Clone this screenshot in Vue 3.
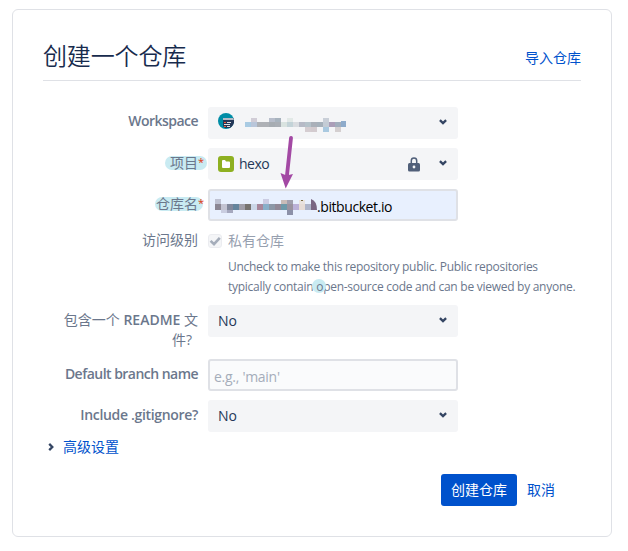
<script setup>
const workspaceCells = [
  [0, 4, 6, 5, '#a9cbe3'], [6, 0, 6, 4, '#d1cdd7'], [6, 4, 6, 5, '#b9c6da'], [12, 4, 12, 5, '#aeb1b6'],
  [24, 0, 6, 4, '#b7bdcb'], [24, 4, 6, 5, '#a6acb2'], [30, 0, 6, 4, '#a7b3be'], [30, 4, 6, 5, '#a9aeb5'],
  [36, 4, 6, 5, '#d9e3e0'], [42, 0, 6, 4, '#e2e9e7'], [42, 4, 6, 5, '#c3d3d8'], [48, 4, 6, 5, '#d9dce0'],
  [54, 4, 6, 5, '#b6bac6'], [60, 4, 6, 5, '#b5c2ca'], [60, 9, 6, 5, '#d5cdd1'], [66, 4, 6, 5, '#aab0b9'],
  [66, 9, 6, 5, '#d3cbcf'], [72, 4, 6, 5, '#a6b1bb'], [78, 0, 6, 4, '#c9cfd8'], [78, 4, 6, 5, '#c4ccd5'],
  [78, 9, 6, 5, '#a9c9e0'], [84, 4, 6, 5, '#ab9eb8'], [90, 4, 6, 5, '#a1adbc'], [90, 9, 6, 5, '#d4cfd0'],
  [96, 3, 5, 6, '#8eabcb']
]
const repoCells = [
  [0, 0, 6, 5, '#bfc2d2'], [0, 5, 6, 6, '#8c8793'], [6, 5, 6, 6, '#c3c3d1'], [6, 11, 6, 3, '#c9cde0'],
  [12, 5, 6, 6, '#82889b'], [12, 11, 6, 3, '#a5a8be'], [18, 5, 6, 6, '#65849c'], [24, 5, 6, 6, '#a09ea8'],
  [30, 5, 6, 6, '#77736f'], [36, 5, 6, 6, '#cbd7e8'], [42, 5, 6, 6, '#a7879b'], [48, 0, 6, 5, '#cbcce3'],
  [48, 5, 6, 6, '#88afc9'], [54, 5, 6, 6, '#8c98a7'], [60, 5, 6, 6, '#918997'], [66, 1, 6, 4, '#c8bcb8'],
  [66, 5, 6, 6, '#6d99a9'], [72, 1, 6, 4, '#a09fae'], [72, 5, 6, 6, '#99929f'], [72, 11, 6, 5, '#8d91a8'],
  [78, 5, 6, 6, '#bbb1d8'], [84, 1, 6, 4, '#e9e3df'], [84, 5, 6, 6, '#e6dcd6'], [86, 1, 2, 1, '#786d40'],
  [90, 5, 6, 6, '#aeb5ca']
]
</script>

<template>
  <main class="card">
    <header class="head">
      <h1>创建一个仓库</h1>
      <a class="import">导入仓库</a>
    </header>

    <form class="form" @submit.prevent>
      <div class="row">
        <label class="label ws">Workspace</label>
        <div class="select">
          <svg class="avatar" width="16" height="16" viewBox="0 0 16 16">
            <circle cx="8" cy="8" r="8" fill="#008da6" />
            <path d="M5 5h10.4a8 8 0 0 1-1.9 8.8L12 15H7L5 13z" fill="#253858" />
            <path d="M5 5h10.4l.5 2H5z" fill="#b3bac5" />
            <path d="M6 9.5h2M6 13.5h2" stroke="#ff5630" />
            <path d="M9 9.5h4M6 11.5h6M9 13.5h3" stroke="#dfe1e6" />
          </svg>
          <svg class="mosaic" width="101" height="14">
            <rect v-for="(c, i) in workspaceCells" :key="i" :x="c[0]" :y="c[1]" :width="c[2]" :height="c[3]" :fill="c[4]" />
          </svg>
          <svg class="chev" width="8" height="6" viewBox="0 0 8 6"><path d="M.9 1.1 4 4.1 7.1 1.1" /></svg>
        </div>
      </div>

      <div class="row">
        <label class="label"><span class="mark project">项目<i>*</i></span></label>
        <div class="select">
          <svg class="folder" width="16" height="16" viewBox="0 0 16 16">
            <rect width="16" height="16" rx="3" fill="#8eb021" />
            <path d="M4 5q0-1 1-1h2l1 1.5h3q1 0 1 1V11q0 1-1 1H5q-1 0-1-1z" fill="#fff" />
          </svg>
          <span class="value hexo">hexo</span>
          <svg class="lock" width="12" height="15" viewBox="0 0 12 15">
            <path d="M3.3 7V3.7a2.7 2.7 0 0 1 5.4 0V7" fill="none" stroke="#505f79" stroke-width="1.5" />
            <rect y="6" width="12" height="8.5" rx="1.5" fill="#505f79" />
            <circle cx="6" cy="10" r="1.4" fill="#f4f5f7" />
          </svg>
          <svg class="chev" width="8" height="6" viewBox="0 0 8 6"><path d="M.9 1.1 4 4.1 7.1 1.1" /></svg>
        </div>
      </div>

      <div class="row">
        <label class="label"><span class="mark repo">仓库名<i>*</i></span></label>
        <div class="input filled">
          <svg class="mosaic" width="102" height="17">
            <rect v-for="(c, i) in repoCells" :key="i" :x="c[0]" :y="c[1]" :width="c[2]" :height="c[3]" :fill="c[4]" />
            <path d="M96 0q6 2 6 11h-6z" fill="#796583" />
          </svg>
          <span class="domain">.bitbucket.io</span>
        </div>
        <svg class="arrow" width="16" height="54" viewBox="0 0 16 54">
          <path d="M11 2 6.7 42" stroke="#a349a4" stroke-width="3.8" stroke-linecap="round" />
          <path d="M.5 37 6.5 39.5 13 38 5.7 52.5z" fill="#a349a4" />
        </svg>
      </div>

      <div class="row access">
        <label class="label">访问级别</label>
        <div class="access-body">
          <div class="check-line">
            <svg width="14" height="14" viewBox="0 0 14 14">
              <rect x=".5" y=".5" width="13" height="13" rx="2.5" fill="#f4f5f7" stroke="#ebecf0" />
              <path d="m2.6 6.8 3.4 3.4 5.8-6.4" fill="none" stroke="#a5adba" stroke-width="2.6" />
            </svg>
            <span>私有仓库</span>
          </div>
          <p class="help">
            <span class="line one">Uncheck to make this repository public. Public repositories</span>
            <span class="line two">typically contain <b class="dot">o</b>pen-source code and can be viewed by anyone.</span>
          </p>
        </div>
      </div>

      <div class="row readme">
        <label class="label">包含一个 <b>README</b> 文<br /><span class="tail">件?</span></label>
        <div class="select">
          <span class="value">No</span>
          <svg class="chev" width="8" height="6" viewBox="0 0 8 6"><path d="M.9 1.1 4 4.1 7.1 1.1" /></svg>
        </div>
      </div>

      <div class="row">
        <label class="label branch">Default branch name</label>
        <div class="input"><span class="placeholder">e.g., 'main'</span></div>
      </div>

      <div class="row">
        <label class="label ignore">Include .gitignore?</label>
        <div class="select">
          <span class="value">No</span>
          <svg class="chev" width="8" height="6" viewBox="0 0 8 6"><path d="M.9 1.1 4 4.1 7.1 1.1" /></svg>
        </div>
      </div>

      <a class="advanced">
        <svg width="6" height="8" viewBox="0 0 6 8"><path d="M1.2 .9 4.3 4 1.2 7.1" /></svg>
        <span>高级设置</span>
      </a>

      <footer class="actions">
        <button type="submit">创建仓库</button>
        <a>取消</a>
      </footer>
    </form>
  </main>
</template>

<style>
body {
  background: #fff;
}
</style>

<style scoped>
* {
  box-sizing: border-box;
}
.card {
  width: 600px;
  height: 528px;
  margin: 9px 0 0 12px;
  padding: 0 30px;
  border: 1px solid #dfe1e6;
  border-radius: 6px;
  font: 14px/20px "Open Sans", "Noto Sans CJK SC", sans-serif;
  color: #253858;
  white-space: nowrap;
}
.head {
  display: flex;
  justify-content: space-between;
  height: 71px;
  border-bottom: 1px solid #dfe1e6;
}
h1 {
  margin: 30px 0 0;
  font: 350 24px/30px "Noto Sans CJK SC", sans-serif;
  letter-spacing: -0.15px;
  color: #172b4d;
}
.import {
  margin-top: 38px;
}
a {
  color: #0052cc;
}
.form {
  display: flex;
  flex-direction: column;
  gap: 9px;
  padding-top: 26px;
}
.row {
  position: relative;
  display: grid;
  grid-template-columns: 155px 250px;
  column-gap: 10px;
  height: 32px;
}
.label {
  padding-top: 5px;
  text-align: right;
  color: #6b778c;
}
.ws,
.branch,
.ignore,
.label b {
  font-weight: 600;
}
.ws,
.branch {
  letter-spacing: -0.53px;
}
.ws {
  padding-top: 4px;
}
.ignore {
  letter-spacing: -0.33px;
}
.mark {
  display: inline-block;
  height: 14px;
  border-radius: 8px;
  background: #c9ebf2;
  line-height: 14px;
}
.mark i {
  display: inline-block;
  width: 5px;
  font-style: normal;
  font-size: 11px;
  line-height: 12px;
  vertical-align: top;
  color: #de350b;
}
.project {
  margin-right: -9px;
  padding: 0 4px 0 5px;
}
.repo {
  margin-right: -5px;
  padding-left: 1px;
}
.select,
.input {
  display: flex;
  align-items: center;
  height: 32px;
  padding: 0 11px 0 10px;
  border-radius: 3px;
  background: #f4f5f7;
}
.avatar {
  margin-top: -5px;
}
.select .mosaic {
  margin: 4px 0 0 11px;
}
.chev {
  margin: -3px 0 0 auto;
}
.chev path,
.advanced path {
  fill: none;
  stroke: #344563;
  stroke-width: 2.3;
}
.hexo {
  margin-left: 5px;
  letter-spacing: -0.5px;
}
.lock {
  margin: 0 0 0 auto;
}
.lock + .chev {
  margin-left: 19px;
}
.input {
  padding: 0 4px;
  border: 2px solid #dfe1e6;
  background: #fafbfc;
}
.filled {
  background: #e8f0fe;
  padding-left: 5px;
}
.filled .mosaic {
  margin-top: 5px;
}
.domain {
  margin: 3px 0 0;
  letter-spacing: -0.42px;
  color: #000;
}
.placeholder {
  margin-top: 3px;
  letter-spacing: -0.28px;
  color: #a5adba;
}
.arrow {
  position: absolute;
  left: 237px;
  top: -53px;
}
.access {
  height: 66px;
}
.access .label,
.check-line {
  padding-top: 0;
}
.check-line {
  display: flex;
  align-items: center;
  gap: 6px;
  height: 22px;
  color: #97a0af;
}
.help {
  margin: 5px 0 0 20px;
  font-size: 12px;
  color: #6b778c;
}
.line {
  display: block;
  letter-spacing: -0.3px;
}
.two {
  letter-spacing: -0.27px;
}
.dot {
  position: relative;
  z-index: 0;
  font-weight: 400;
}
.dot::before {
  content: "";
  position: absolute;
  z-index: -1;
  left: -4px;
  top: 1px;
  width: 14px;
  height: 14px;
  border-radius: 50%;
  background: #c9ebf2;
}
.readme {
  height: 45px;
}
.tail {
  margin-right: 6px;
}
.advanced {
  display: flex;
  align-items: center;
  gap: 9px;
  margin: -4px 0 0 5px;
}
.actions {
  display: flex;
  align-items: center;
  gap: 10px;
  margin: 8px 0 0 398px;
}
button {
  width: 76px;
  height: 32px;
  padding: 0;
  border: 0;
  border-radius: 3px;
  background: #0052cc;
  color: #fff;
  font: inherit;
}
</style>
